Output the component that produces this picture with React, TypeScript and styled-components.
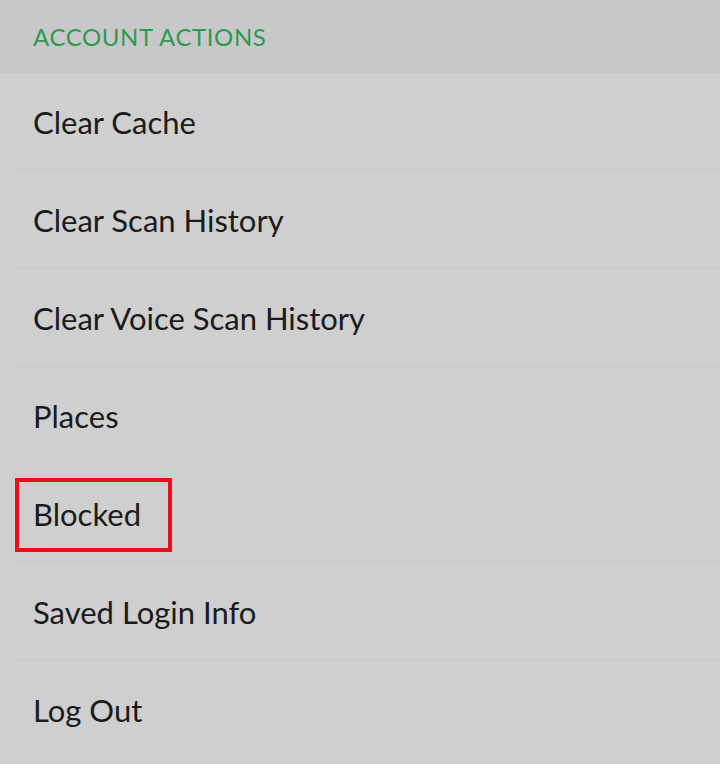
import React from 'react';
import styled, { createGlobalStyle } from 'styled-components';

const GlobalStyle = createGlobalStyle`
    html, body {
        margin: 0;
        padding: 0;
        background: #cfcfcf;
    }
    body {
        font-family: Lato, "Noto Sans", sans-serif;
    }
`;

const Page = styled.div`
    width: 720px;
    height: 764px;
    overflow: hidden;
    background: #cfcfcf;
`;

const SectionHeader = styled.div`
    height: 73px;
    box-sizing: border-box;
    padding-left: 33px;
    display: flex;
    align-items: center;
    background: #c8c8ca;
    color: #2f9a4f;
    font-size: 24px;
    letter-spacing: 0.6px;
`;

const Row = styled.div<{ last?: boolean }>`
    position: relative;
    height: 98px;
    box-sizing: border-box;
    padding-left: 33px;
    display: flex;
    align-items: center;
    color: #1b1b1b;
    font-size: 31px;
    &::after {
        content: '';
        display: ${props => props.last ? 'none' : 'block'};
        position: absolute;
        left: 16px;
        right: 0;
        bottom: 0;
        height: 2px;
        background: #cbcbcb;
    }
`;

const Label = styled.span`
    position: relative;
`;

const Highlight = styled.span`
    position: absolute;
    left: -18px;
    right: -31px;
    top: -17px;
    bottom: -19px;
    border: 4px solid #e8111b;
`;

const items = [
    'Clear Cache',
    'Clear Scan History',
    'Clear Voice Scan History',
    'Places',
    'Blocked',
    'Saved Login Info',
    'Log Out',
];

export default function App() {
    return (
        <Page>
            <GlobalStyle />
            <SectionHeader>ACCOUNT ACTIONS</SectionHeader>
            {items.map((item, i) => (
                <Row key={item} last={i === items.length - 1}>
                    <Label>
                        {item}
                        {item === 'Blocked' && <Highlight />}
                    </Label>
                </Row>
            ))}
        </Page>
    );
}
